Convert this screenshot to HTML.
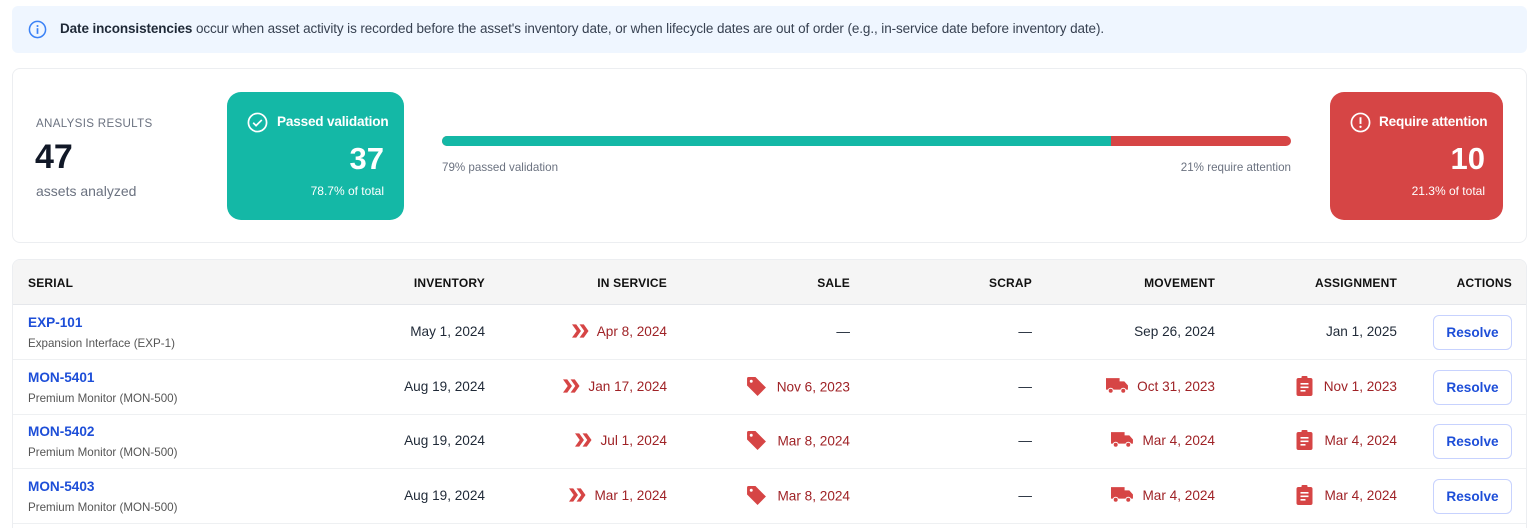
<!DOCTYPE html>
<html><head><meta charset="utf-8"><style>
*{box-sizing:border-box;margin:0;padding:0}
html,body{width:1536px;height:528px;overflow:hidden}
body{background:#fff;font-family:"Liberation Sans",Roboto,sans-serif;color:#1f2937;position:relative}
.abs{position:absolute}
.banner{left:12px;top:6px;width:1515px;height:47px;background:#eff6ff;border-radius:6px}
.banner .t{left:48px;top:15px;font-size:13.5px;color:#374151;white-space:nowrap;letter-spacing:-0.1px}
.card{left:12px;top:68px;width:1515px;height:175px;border:1px solid #eceef1;border-radius:8px}
.box{top:92px;width:177px;height:128px;border-radius:14px;color:#fff}
.tbl{left:12px;top:259px;width:1515px;height:280px;border:1px solid #eceef1;border-radius:8px;overflow:hidden}
.hdr{left:0;top:0;width:1515px;height:45px;background:#f5f5f5;border-bottom:1px solid #e5e7eb}
.h{top:16px;font-size:12px;font-weight:bold;letter-spacing:.2px;color:#111}
.row{left:0;width:1515px;height:55px;border-bottom:1px solid #eef0f2}
.c{font-size:13.6px;top:19px;white-space:nowrap;text-align:right}
.red{color:#9f2226}
.ic{display:inline-block;vertical-align:middle;margin-right:8px;margin-top:-3px}
.btn{left:1420px;top:10px;width:79px;height:35px;border:1px solid #c7d2fe;border-radius:6px;color:#1d4ed8;font-weight:bold;font-size:13.6px;text-align:center;line-height:33px}
.ser{left:15px;top:10px;color:#1d4ed8;font-size:13.6px;font-weight:bold}
.sub{left:15px;top:32px;color:#555;font-size:11.6px}
</style></head><body>
<div class="abs banner">
<svg class="abs" style="left:16px;top:14px" width="19" height="19" viewBox="0 0 20 20"><circle cx="10" cy="10" r="8.5" fill="none" stroke="#3b82f6" stroke-width="1.6"/><circle cx="10" cy="6.3" r="1.1" fill="#3b82f6"/><rect x="9.1" y="8.6" width="1.8" height="6" fill="#3b82f6"/></svg>
<div class="abs t"><b style="color:#1f2937">Date inconsistencies</b> occur when asset activity is recorded before the asset's inventory date, or when lifecycle dates are out of order (e.g., in-service date before inventory date).</div>
</div>
<div class="abs card"></div>
<div class="abs" style="left:36px;top:117px;font-size:11.6px;color:#6b7280;letter-spacing:.3px">ANALYSIS RESULTS</div>
<div class="abs" style="left:35px;top:138px;font-size:34px;font-weight:bold;color:#111827">47</div>
<div class="abs" style="left:36px;top:183px;font-size:14px;color:#6b7280">assets analyzed</div>
<div class="abs box" style="left:227px;background:#14b8a6">
<svg class="abs" style="left:20px;top:20px" width="21" height="21" viewBox="0 0 22 22"><circle cx="11" cy="11" r="9.5" fill="none" stroke="#fff" stroke-width="1.8"/><path d="M6.5 11.3l3 3 6-6" fill="none" stroke="#fff" stroke-width="1.8"/></svg>
<div class="abs" style="left:50px;top:22px;font-size:13.6px;font-weight:bold;white-space:nowrap;letter-spacing:-0.2px">Passed validation</div>
<div class="abs" style="right:20px;top:49px;font-size:31px;font-weight:bold">37</div>
<div class="abs" style="right:20px;top:92px;font-size:12px">78.7% of total</div>
</div>
<div class="abs" style="left:442px;top:136px;width:849px;height:10px;border-radius:5px;overflow:hidden;background:#d64545"><div style="width:669px;height:10px;background:#14b8a6"></div></div>
<div class="abs" style="left:442px;top:161px;font-size:11.6px;color:#6b7280">79% passed validation</div>
<div class="abs" style="right:245px;top:161px;font-size:11.6px;color:#6b7280">21% require attention</div>
<div class="abs box" style="left:1330px;width:173px;background:#d64545">
<svg class="abs" style="left:20px;top:20px" width="21" height="21" viewBox="0 0 22 22"><circle cx="11" cy="11" r="9.5" fill="none" stroke="#fff" stroke-width="1.8"/><rect x="10" y="5.5" width="2" height="7" fill="#fff"/><circle cx="11" cy="15.5" r="1.2" fill="#fff"/></svg>
<div class="abs" style="left:49px;top:22px;font-size:13.6px;font-weight:bold;white-space:nowrap;letter-spacing:-0.2px">Require attention</div>
<div class="abs" style="right:18px;top:49px;font-size:31px;font-weight:bold">10</div>
<div class="abs" style="right:18px;top:92px;font-size:12px">21.3% of total</div>
</div>

<div class="abs tbl">
<div class="abs hdr">
<div class="abs h" style="left:15px">SERIAL</div>
<div class="abs h" style="right:1043px">INVENTORY</div>
<div class="abs h" style="right:861px">IN SERVICE</div>
<div class="abs h" style="right:678px">SALE</div>
<div class="abs h" style="right:496px">SCRAP</div>
<div class="abs h" style="right:313px">MOVEMENT</div>
<div class="abs h" style="right:131px">ASSIGNMENT</div>
<div class="abs h" style="right:16px">ACTIONS</div>
</div>
<svg width="0" height="0" style="position:absolute"><defs>
<symbol id="chev" viewBox="0 0 18 14"><path d="M0 0h4.5l5 7-5 7H0l5-7z M8 0h4.5l5 7-5 7H8l5-7z" fill="#d64545"/></symbol>
<symbol id="tag" viewBox="0 0 20 20"><path d="M1 2.5A1.5 1.5 0 0 1 2.5 1H9l10 10-8 8L1 9z" fill="#d64545"/><circle cx="5" cy="5" r="1.4" fill="#fff"/></symbol>
<symbol id="truck" viewBox="0 0 22 16"><path d="M0 1h13v11H0z M13 4h4.5l3.5 4v4h-8z" fill="#d64545"/><circle cx="4.5" cy="13" r="2.4" fill="#d64545" stroke="#fff" stroke-width="1"/><circle cx="16.5" cy="13" r="2.4" fill="#d64545" stroke="#fff" stroke-width="1"/></symbol>
<symbol id="clip" viewBox="0 0 16 20"><rect x="0" y="2" width="16" height="18" rx="2" fill="#d64545"/><rect x="5" y="0" width="6" height="4" rx="1" fill="#d64545"/><rect x="4" y="7" width="8" height="1.6" fill="#fff"/><rect x="4" y="10.5" width="8" height="1.6" fill="#fff"/><rect x="4" y="14" width="5" height="1.6" fill="#fff"/></symbol>
</defs></svg>

<div class="abs row" style="top:45px">
<div class="abs ser">EXP-101</div><div class="abs sub">Expansion Interface (EXP-1)</div>
<div class="abs c" style="right:1043px">May 1, 2024</div>
<div class="abs c red" style="right:861px"><svg class="ic" width="17" height="14"><use href="#chev"/></svg>Apr 8, 2024</div>
<div class="abs c" style="right:678px">—</div>
<div class="abs c" style="right:496px">—</div>
<div class="abs c" style="right:313px">Sep 26, 2024</div>
<div class="abs c" style="right:131px">Jan 1, 2025</div>
<div class="abs btn">Resolve</div>
</div>
<div class="abs row" style="top:100px">
<div class="abs ser">MON-5401</div><div class="abs sub">Premium Monitor (MON-500)</div>
<div class="abs c" style="right:1043px">Aug 19, 2024</div>
<div class="abs c red" style="right:861px"><svg class="ic" width="17" height="14"><use href="#chev"/></svg>Jan 17, 2024</div>
<div class="abs c red" style="right:678px"><svg class="ic" width="21" height="21" style="margin-right:10px"><use href="#tag"/></svg>Nov 6, 2023</div>
<div class="abs c" style="right:496px">—</div>
<div class="abs c red" style="right:313px"><svg class="ic" width="23" height="17"><use href="#truck"/></svg>Oct 31, 2023</div>
<div class="abs c red" style="right:131px"><svg class="ic" width="17" height="20" style="margin-right:11px"><use href="#clip"/></svg>Nov 1, 2023</div>
<div class="abs btn">Resolve</div>
</div>
<div class="abs row" style="top:154px">
<div class="abs ser">MON-5402</div><div class="abs sub">Premium Monitor (MON-500)</div>
<div class="abs c" style="right:1043px">Aug 19, 2024</div>
<div class="abs c red" style="right:861px"><svg class="ic" width="17" height="14"><use href="#chev"/></svg>Jul 1, 2024</div>
<div class="abs c red" style="right:678px"><svg class="ic" width="21" height="21" style="margin-right:10px"><use href="#tag"/></svg>Mar 8, 2024</div>
<div class="abs c" style="right:496px">—</div>
<div class="abs c red" style="right:313px"><svg class="ic" width="23" height="17"><use href="#truck"/></svg>Mar 4, 2024</div>
<div class="abs c red" style="right:131px"><svg class="ic" width="17" height="20" style="margin-right:11px"><use href="#clip"/></svg>Mar 4, 2024</div>
<div class="abs btn">Resolve</div>
</div>
<div class="abs row" style="top:209px">
<div class="abs ser">MON-5403</div><div class="abs sub">Premium Monitor (MON-500)</div>
<div class="abs c" style="right:1043px">Aug 19, 2024</div>
<div class="abs c red" style="right:861px"><svg class="ic" width="17" height="14"><use href="#chev"/></svg>Mar 1, 2024</div>
<div class="abs c red" style="right:678px"><svg class="ic" width="21" height="21" style="margin-right:10px"><use href="#tag"/></svg>Mar 8, 2024</div>
<div class="abs c" style="right:496px">—</div>
<div class="abs c red" style="right:313px"><svg class="ic" width="23" height="17"><use href="#truck"/></svg>Mar 4, 2024</div>
<div class="abs c red" style="right:131px"><svg class="ic" width="17" height="20" style="margin-right:11px"><use href="#clip"/></svg>Mar 4, 2024</div>
<div class="abs btn">Resolve</div>
</div>
</div>
</body></html>
